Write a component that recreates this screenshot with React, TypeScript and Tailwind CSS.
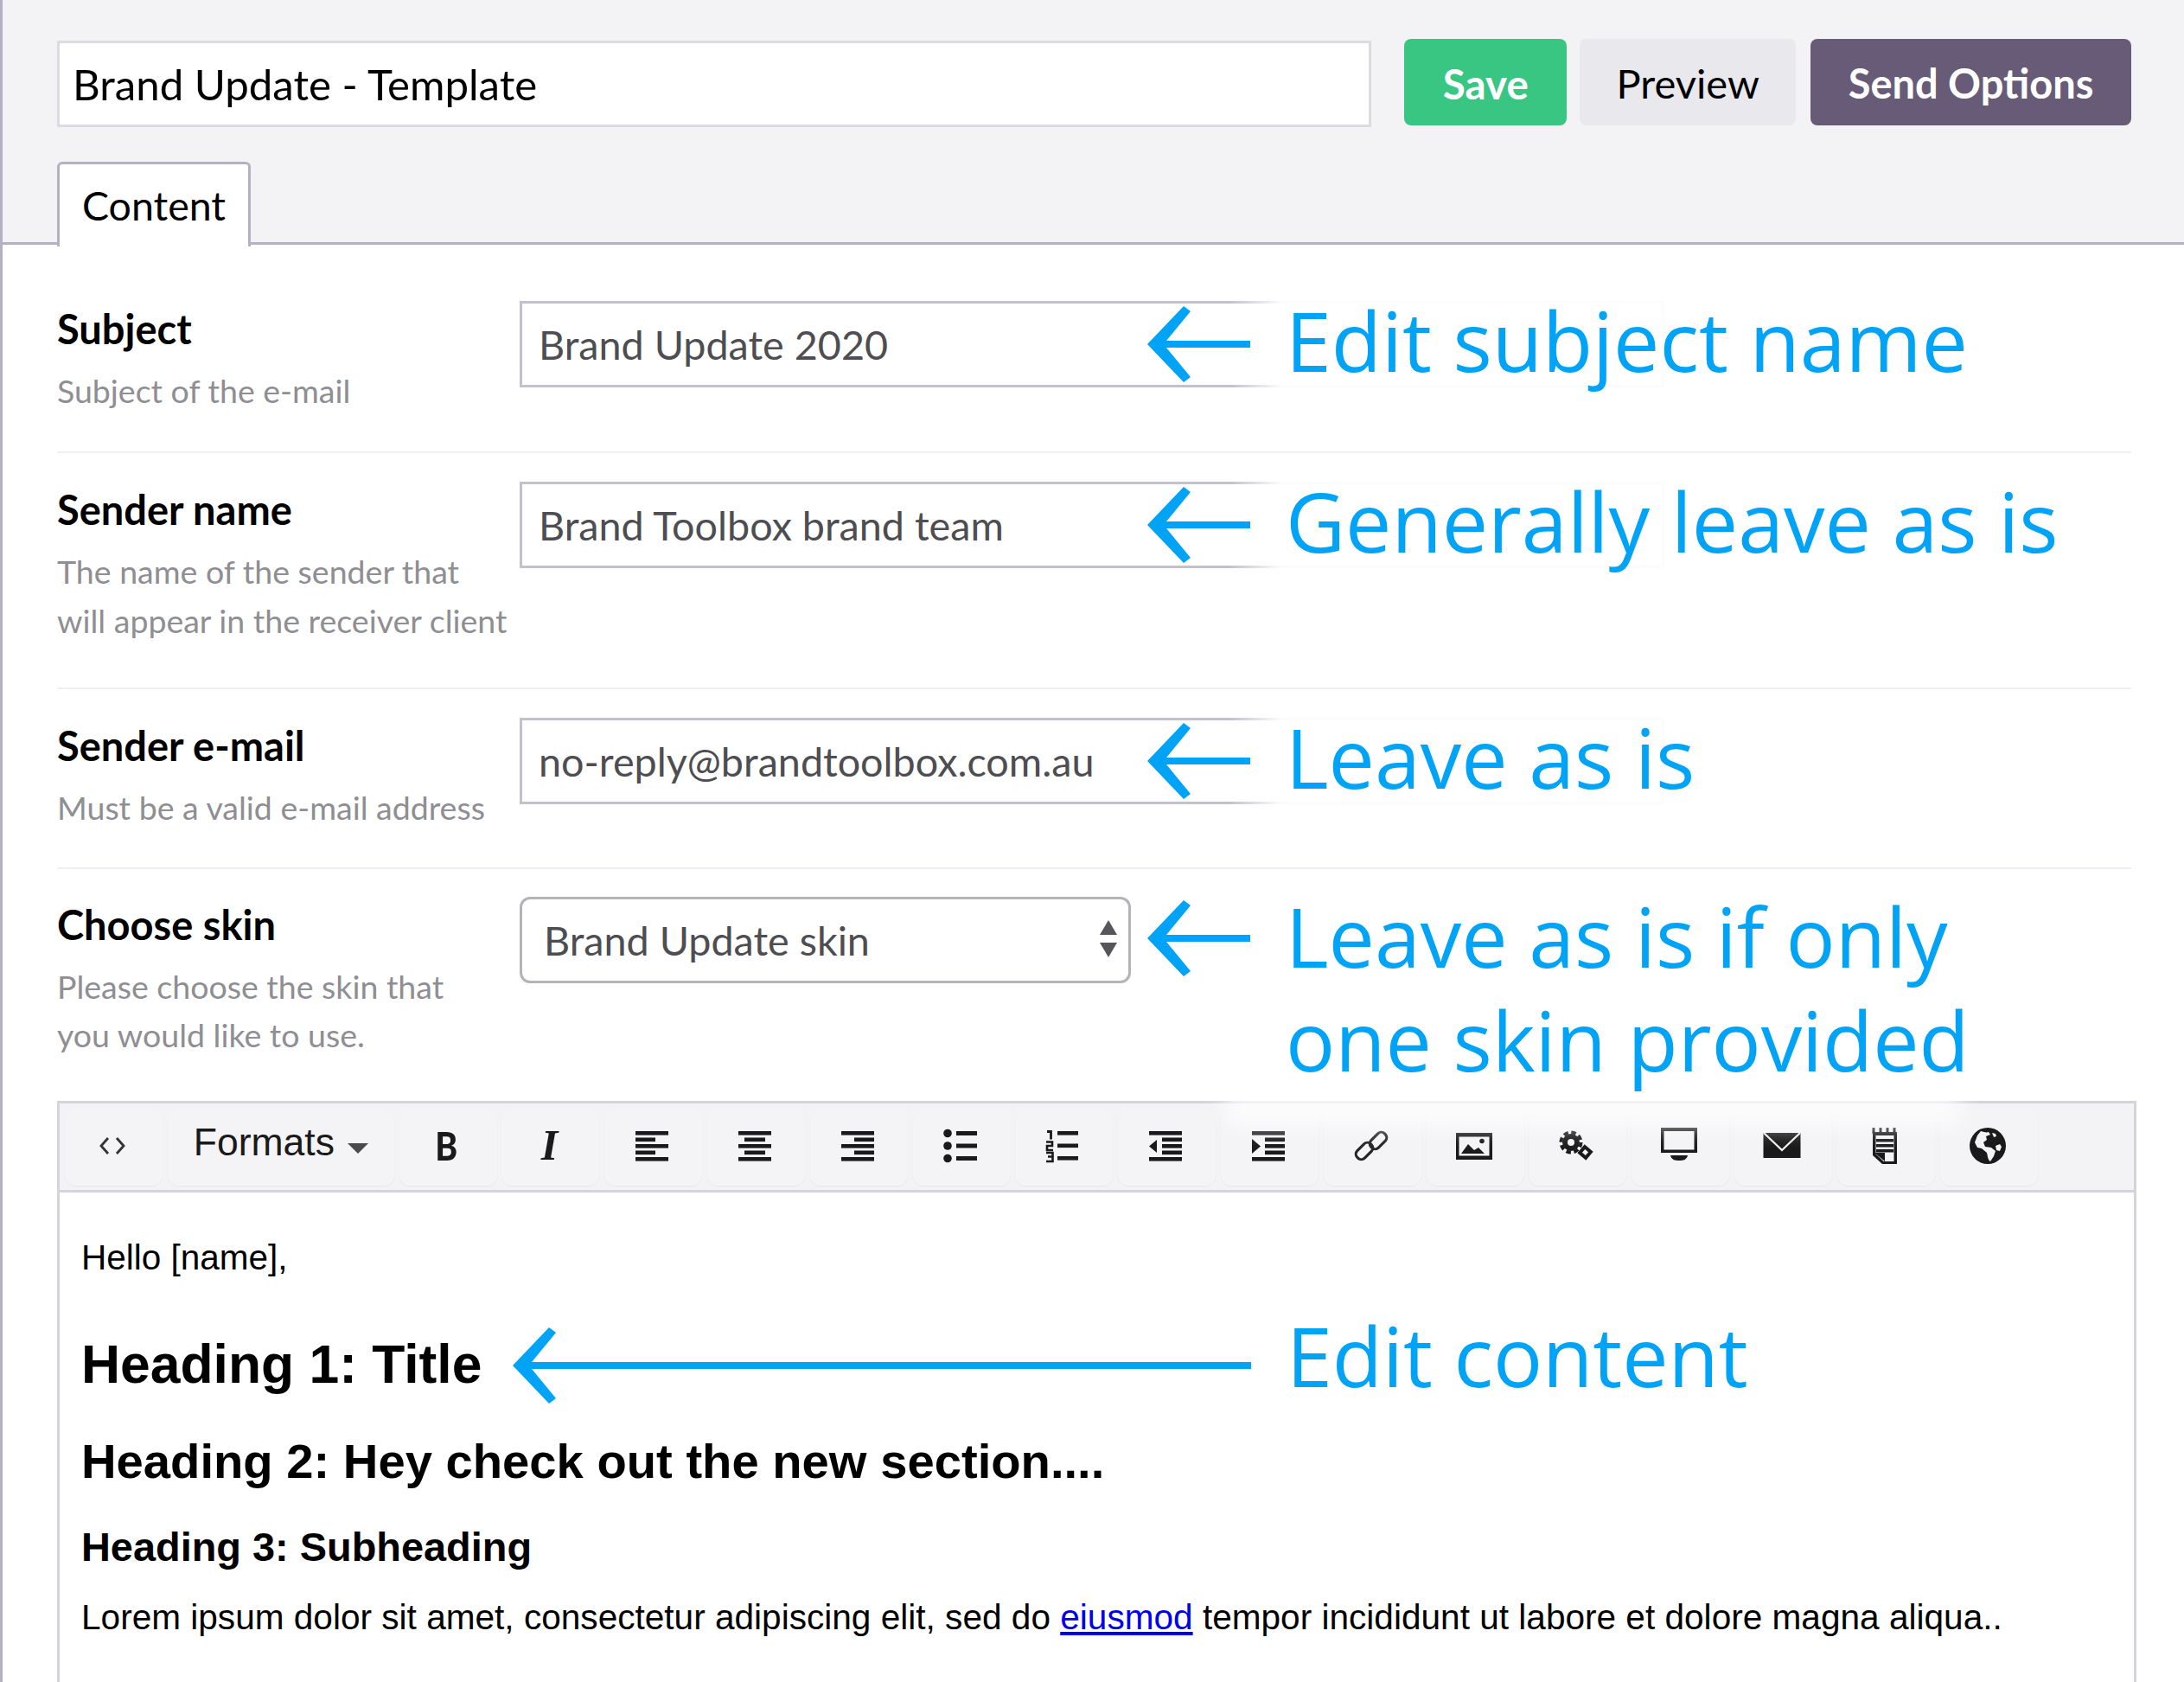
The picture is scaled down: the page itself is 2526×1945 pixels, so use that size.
import React from 'react';

const Lines = ({ rows }: { rows: [number, number][] }) => (
  <svg width="40" height="40" viewBox="0 0 40 40" fill="#1a1a1a">
    {rows.map(([x, w], i) => (
      <rect key={i} x={x} y={3 + i * 7.5} width={w} height={4.6} />
    ))}
  </svg>
);

const IconAlignLeft = () => <Lines rows={[[1, 38], [1, 23], [1, 38], [1, 23], [1, 38]]} />;
const IconAlignCenter = () => <Lines rows={[[1, 38], [8, 24], [1, 38], [8, 24], [1, 38]]} />;
const IconAlignRight = () => <Lines rows={[[1, 38], [16, 23], [1, 38], [16, 23], [1, 38]]} />;

const IconBullets = () => (
  <svg width="40" height="40" viewBox="0 0 40 40" fill="#1a1a1a">
    <circle cx="5" cy="5.500" r="4.800" />
    <circle cx="5" cy="20" r="4.800" />
    <circle cx="5" cy="34.500" r="4.800" />
    <rect x="15" y="3" width="24" height="5" />
    <rect x="15" y="17.500" width="24" height="5" />
    <rect x="15" y="32" width="24" height="5" />
  </svg>
);

const IconNumbers = () => (
  <svg width="40" height="40" viewBox="0 0 40 40" fill="none" stroke="#1a1a1a">
    <path d="M2 3.500h4.500v9" strokeWidth="2.800" />
    <path d="M1 15.500h7v4.500H2v5h7" strokeWidth="2.600" />
    <path d="M1 28h7.500v4.500H3M8.500 32.500v5.500H1" strokeWidth="2.600" />
    <rect x="14" y="3" width="24" height="4.600" fill="#1a1a1a" stroke="none" />
    <rect x="14" y="17.500" width="24" height="4.600" fill="#1a1a1a" stroke="none" />
    <rect x="14" y="32" width="24" height="4.600" fill="#1a1a1a" stroke="none" />
  </svg>
);

const IconOutdent = () => (
  <svg width="40" height="40" viewBox="0 0 40 40" fill="#1a1a1a">
    <rect x="1" y="3" width="38" height="4.600" />
    <rect x="16" y="10.500" width="23" height="4.600" />
    <rect x="16" y="18" width="23" height="4.600" />
    <rect x="16" y="25.500" width="23" height="4.600" />
    <rect x="1" y="33" width="38" height="4.600" />
    <path d="M10 13v15L1 20.500z" />
  </svg>
);

const IconIndent = () => (
  <svg width="40" height="40" viewBox="0 0 40 40" fill="#1a1a1a">
    <rect x="1" y="3" width="38" height="4.600" />
    <rect x="16" y="10.500" width="23" height="4.600" />
    <rect x="16" y="18" width="23" height="4.600" />
    <rect x="16" y="25.500" width="23" height="4.600" />
    <rect x="1" y="33" width="38" height="4.600" />
    <path d="M1 12v17l10-8.500z" />
  </svg>
);

const IconLink = () => (
  <svg width="40" height="40" viewBox="0 0 40 40" fill="none" stroke="#262626" strokeWidth="3.200">
    <rect x="17" y="8" width="22" height="12" rx="5.500" transform="rotate(-45 28 14)" />
    <rect x="1" y="20" width="22" height="12" rx="5.500" transform="rotate(-45 12 26)" />
  </svg>
);

const IconImage = () => (
  <svg width="44" height="40" viewBox="0 0 44 40" fill="#1a1a1a">
    <path fillRule="evenodd" d="M1 5h42v31H1zM4.500 9.500v22h35v-22z" />
    <circle cx="31" cy="14.500" r="2.800" />
    <path d="M7 29l8-11 7 7 5-3 7 7z" />
  </svg>
);

const IconGears = () => (
  <svg width="40" height="40" viewBox="0 0 40 40" fill="none" stroke="#1a1a1a">
    <circle cx="14" cy="16" r="7" strokeWidth="6" />
    <circle cx="14" cy="16" r="11.500" strokeWidth="4" strokeDasharray="5.500 3.530" />
    <rect x="26" y="23" width="9" height="9" strokeWidth="4" transform="rotate(40 30.500 27.500)" />
  </svg>
);

const IconMonitor = () => (
  <svg width="44" height="44" viewBox="0 0 44 44" fill="#1a1a1a">
    <path fillRule="evenodd" d="M1 1h42v29H1zM4.500 5v21.500h35V5z" />
    <path d="M12 33h20c-1 5-5 6-10 6s-9-1-10-6z" />
  </svg>
);

const IconMail = () => (
  <svg width="44" height="32" viewBox="0 0 44 32">
    <rect x="0.500" y="1" width="43" height="29" fill="#1a1a1a" />
    <path d="M1 1 22 21 43 1" fill="none" stroke="#f3f2f5" strokeWidth="2.200" />
  </svg>
);

const IconNote = () => (
  <svg width="32" height="44" viewBox="0 0 32 44" fill="#1a1a1a">
    <path fillRule="evenodd" d="M2 6h28v37H13L2 33zM5.500 10v21.500l8.500 8V40h12.500V10z" />
    <path d="M3 1v7M11 1v7M19 1v7M27 1v7" stroke="#1a1a1a" strokeWidth="3" />
    <rect x="6" y="14" width="20" height="3.500" />
    <rect x="6" y="20" width="20" height="3.500" />
    <rect x="6" y="26" width="20" height="3.500" />
    <path d="M4 30h12v10z" />
  </svg>
);

const IconGlobe = () => (
  <svg width="44" height="44" viewBox="0 0 44 44">
    <circle cx="22" cy="22" r="21" fill="#1a1a1a" />
    <path
      fill="#f3f2f5"
      d="M14 5c4 1 6 2 9 1l2 3-5 2 1 4-4 3 2 5 7 1 5 4-2 6-4 6c-3-2-3-6-4-10l-6-5-5-1-3-6 3-8zM27 7l4 1 1 3-3 1zM31 22l5-2 2 3-2 5-4-1z"
    />
  </svg>
);

const IconCode = () => (
  <svg width="40" height="40" viewBox="0 0 40 40" fill="none" stroke="#333" strokeWidth="2.800">
    <path d="M15 11l-8 9 8 9M25 11l8 9-8 9" />
  </svg>
);

function ToolButton({ children, className = 'w-[113px] pb-[6px] pr-[3px]' }: { children: React.ReactNode; className?: string }) {
  return (
    <div className={`flex h-[87px] items-center justify-center rounded-xl bg-[#f4f3f6] shadow-[0_1px_2px_rgba(0,0,0,0.05)] ${className}`}>
      {children}
    </div>
  );
}

function AnnotationArrow({ width }: { width: number }) {
  return (
    <svg width={width} height="88" viewBox={`0 0 ${width} 88`} fill="#00a3f5" className="shrink-0">
      <path d={`M42 0 50 6 22 40H${width}V48H22L50 82 42 88 0 44z`} />
    </svg>
  );
}

function Annotation({ lines }: { lines: string[] }) {
  return (
    <div className="absolute left-[726px] top-[-8px] flex items-start">
      <div className="absolute left-[95px] top-[2px] h-[112px] w-[60px] bg-gradient-to-r from-white/0 to-white/95" />
      <div className="absolute left-[155px] top-[2px] h-[112px] w-[445px] bg-white/95" />
      <div className="relative mt-[14px]">
        <AnnotationArrow width={119} />
      </div>
      <div className="relative ml-[41px] mt-[-7px] font-['Open_Sans',sans-serif] text-[95px] leading-[120px] whitespace-nowrap text-[#00a3f5]">
        {lines.map((l) => (
          <div key={l}>{l}</div>
        ))}
      </div>
    </div>
  );
}

function Row({
  title,
  desc,
  pb,
  children,
}: {
  title: string;
  desc: string[];
  pb: string;
  children: React.ReactNode;
}) {
  return (
    <div className={`flex border-b-2 border-[#f0eff3] pt-[33px] ${pb}`}>
      <div className="w-[535px] shrink-0">
        <div className="pt-[4px] text-[47px] leading-[56px] font-bold text-black">{title}</div>
        <div className="mt-[15px] text-[37.500px] leading-[57px] text-[#8e8e93]">
          {desc.map((d) => (
            <div key={d} className="whitespace-nowrap">{d}</div>
          ))}
        </div>
      </div>
      <div className="relative flex-1">{children}</div>
    </div>
  );
}

function TextField({ value }: { value: string }) {
  return (
    <div className="flex h-[100px] w-[1324px] items-center border-[3px] border-[#c3c1ce] bg-white pl-[19px] text-[46.700px] text-[#4d4d52]">
      {value}
    </div>
  );
}

export default function App() {
  return (
    <div className="h-[1945px] w-[2526px] overflow-hidden border-l-[3px] border-[#b5b1c4] bg-white font-['Lato',sans-serif]">
      {/* Top bar */}
      <div className="h-[283px] border-b-[3px] border-[#b5b1c4] bg-[#f3f2f5] pl-[63px] pr-[61px]">
        <div className="flex items-start pt-[45px]">
          <div className="mt-[2px] flex h-[100px] w-[1521px] items-center border-[3px] border-[#dcdbe2] bg-white pl-[15px] text-[49.200px] text-black">
            Brand Update - Template
          </div>
          <button className="ml-[38px] h-[100px] w-[188px] rounded-lg bg-[#38c682] pt-[3px] text-[47.500px] font-bold text-white">Save</button>
          <button className="ml-[15px] h-[100px] w-[250px] rounded-lg bg-[#e9e8ec] pt-[3px] text-[47px] text-black">Preview</button>
          <button className="ml-[17px] h-[100px] w-[371px] rounded-lg bg-[#675b78] pt-[3px] text-[47px] font-bold text-white">Send Options</button>
        </div>
        <div className="mt-[40px] flex h-[98px] w-[224px] items-center justify-center rounded-t-md border-[3px] border-b-0 border-[#b5b1c4] bg-white text-[46.500px] text-black">
          Content
        </div>
      </div>

      {/* Form */}
      <div className="pl-[63px] pr-[61px] pt-[32px]">
        <Row title="Subject" desc={['Subject of the e-mail']} pb="pb-[42px]">
          <TextField value="Brand Update 2020" />
          <Annotation lines={['Edit subject name']} />
        </Row>
        <Row title="Sender name" desc={['The name of the sender that', 'will appear in the receiver client']} pb="pb-[49px]">
          <TextField value="Brand Toolbox brand team" />
          <Annotation lines={['Generally leave as is']} />
        </Row>
        <Row title="Sender e-mail" desc={['Must be a valid e-mail address']} pb="pb-[41px]">
          <TextField value="no-reply@brandtoolbox.com.au" />
          <Annotation lines={['Leave as is']} />
        </Row>
        <div className="relative flex pt-[32px] pb-[48px]">
          <div className="w-[535px] shrink-0">
            <div className="pt-[4px] text-[47px] leading-[56px] font-bold text-black">Choose skin</div>
            <div className="mt-[16px] text-[37.500px] leading-[56px] text-[#8e8e93]">
              <div>Please choose the skin that</div>
              <div>you would like to use.</div>
            </div>
          </div>
          <div className="relative flex-1">
            <div className="relative flex h-[100px] w-[707px] items-center rounded-xl border-[3px] border-[#b4b3ba] bg-white pl-[25px] pt-[1px] text-[46.700px] text-[#4d4d52]">
              Brand Update skin
              <div className="absolute right-[13px] top-[24px] flex flex-col gap-[9px]">
                <div className="h-0 w-0 border-x-[10px] border-b-[17px] border-x-transparent border-b-[#55555a]" />
                <div className="h-0 w-0 border-x-[10px] border-t-[17px] border-x-transparent border-t-[#55555a]" />
              </div>
            </div>
            <div className="absolute left-[726px] top-[4px]">
              <div className="absolute left-[90px] top-[212px] h-[50px] w-[850px] bg-white/70 blur-[12px]" />
              <div className="relative flex items-start">
                <AnnotationArrow width={119} />
                <div className="ml-[41px] mt-[-19px] font-['Open_Sans',sans-serif] text-[95px] leading-[120px] whitespace-nowrap text-[#00a3f5]">
                  <div>Leave as is if only</div>
                  <div>one skin provided</div>
                </div>
              </div>
            </div>
          </div>
        </div>

        {/* Editor */}
        <div className="-mr-[6px] h-[800px] border-[3px] border-b-0 border-[#d5d4dc]">
          <div className="flex items-center gap-[5.800px] border-b-[3px] border-[#d5d4dc] bg-[#f3f2f5] px-[6px] pt-[8px] pb-[5px]">
            <ToolButton><IconCode /></ToolButton>
            <ToolButton className="w-[262px] pb-[12px] font-['Liberation_Sans',sans-serif] text-[44.500px] text-[#1a1a1a]">
              Formats
              <span className="mt-[12px] ml-[15px] h-0 w-0 border-x-[12px] border-t-[12px] border-x-transparent border-t-[#4a4a4a]" />
            </ToolButton>
            <ToolButton><span className="inline-block scale-x-[0.85] text-[46px] font-black text-[#1a1a1a]">B</span></ToolButton>
            <ToolButton><span className="font-['Liberation_Serif',serif] text-[50px] font-bold italic text-[#1a1a1a]">I</span></ToolButton>
            <ToolButton><IconAlignLeft /></ToolButton>
            <ToolButton><IconAlignCenter /></ToolButton>
            <ToolButton><IconAlignRight /></ToolButton>
            <ToolButton><IconBullets /></ToolButton>
            <ToolButton><IconNumbers /></ToolButton>
            <ToolButton><IconOutdent /></ToolButton>
            <ToolButton><IconIndent /></ToolButton>
            <ToolButton><IconLink /></ToolButton>
            <ToolButton><IconImage /></ToolButton>
            <ToolButton><IconGears /></ToolButton>
            <ToolButton><IconMonitor /></ToolButton>
            <ToolButton><IconMail /></ToolButton>
            <ToolButton><IconNote /></ToolButton>
            <ToolButton><IconGlobe /></ToolButton>
          </div>
          <div className="relative px-[25px] pt-[50px] font-['Liberation_Sans',sans-serif] text-black">
            <p className="text-[40.500px] leading-[50px]">Hello [name],</p>
            <h1 className="mt-[64px] text-[62.400px] leading-[70px] font-bold">Heading 1: Title</h1>
            <h2 className="mt-[45px] text-[56.200px] leading-[64px] font-bold">Heading 2: Hey check out the new section....</h2>
            <h3 className="mt-[41px] text-[46.900px] leading-[52px] font-bold">Heading 3: Subheading</h3>
            <p className="mt-[30px] text-[40.600px] leading-[50px]">
              Lorem ipsum dolor sit amet, consectetur adipiscing elit, sed do{' '}
              <a className="text-[#0000ee] underline">eiusmod</a> tempor incididunt ut labore et dolore magna aliqua..
            </p>
            <div className="absolute left-[524px] top-[156px] flex items-start">
              <AnnotationArrow width={854} />
              <div className="ml-[41px] mt-[-28px] font-['Open_Sans',sans-serif] text-[95px] leading-[120px] whitespace-nowrap text-[#00a3f5]">
                Edit content
              </div>
            </div>
          </div>
        </div>
      </div>
    </div>
  );
}
